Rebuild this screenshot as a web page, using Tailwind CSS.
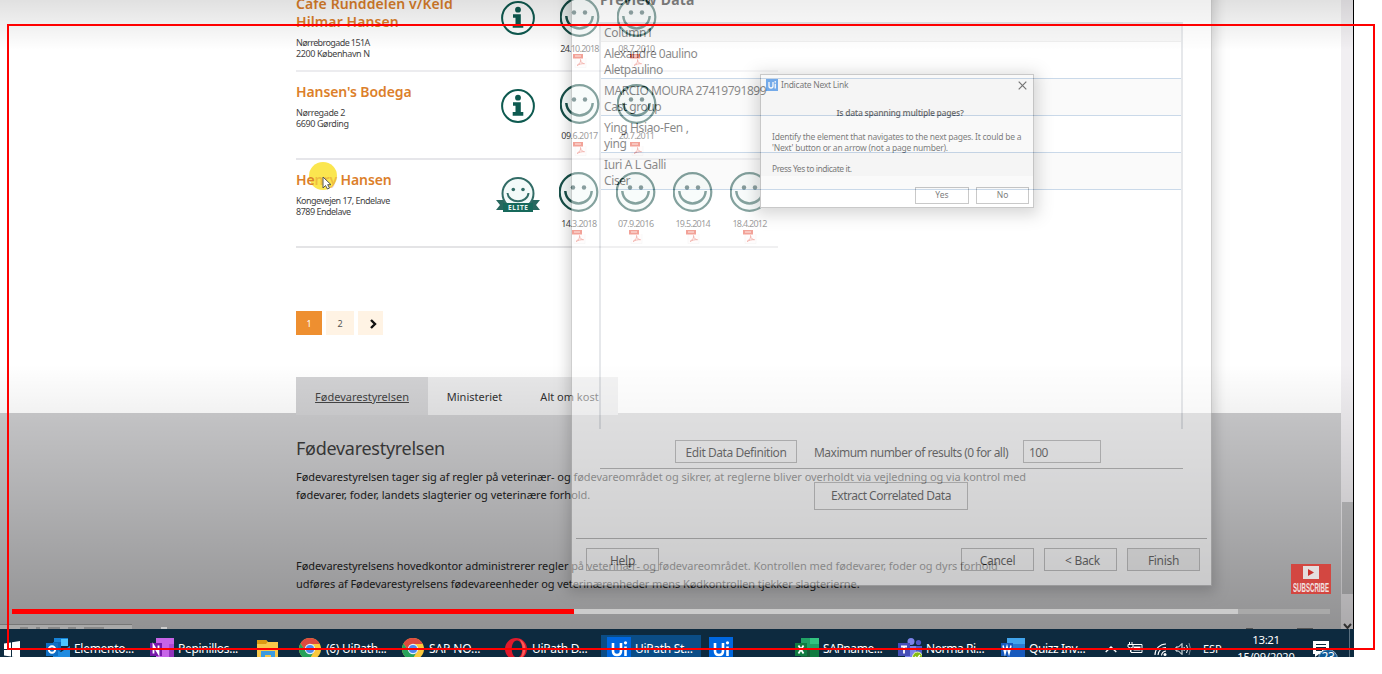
<!DOCTYPE html>
<html lang="da">
<head>
<meta charset="utf-8">
<title>Indicate Next Link</title>
<script src="https://cdn.jsdelivr.net/npm/@tailwindcss/browser@4"></script>
</head>
<body class="relative h-[674px] w-[1382px] overflow-hidden bg-white font-['Noto_Sans',sans-serif] whitespace-nowrap">

<svg class="hidden" aria-hidden="true">
  <symbol id="smile" viewBox="0 0 40 40">
    <circle cx="19.500" cy="20" r="18.8" fill="#f3faf9" stroke="#164f48" stroke-width="2.200"/>
    <circle cx="14" cy="15.5" r="2.2" fill="#1f4848"/><circle cx="25" cy="15.500" r="2.2" fill="#1f4848"/>
    <path d="M6.300 19C7.500 35.500 31.500 35.500 32.700 19" fill="none" stroke="#164f48" stroke-width="2.500"/>
  </symbol>
  <symbol id="info" viewBox="0 0 34 34">
    <circle cx="17" cy="17" r="15.900" fill="#fff" stroke="#0e5a50" stroke-width="2"/>
    <circle cx="17" cy="8.700" r="2.900" fill="#0e5a50"/>
    <path d="M12 13.200h7.800v9.800h2.500v3.800H11.700V23h2.800v-6.300H12z" fill="#0e5a50"/>
  </symbol>
  <symbol id="elite" viewBox="0 0 46 36">
    <path d="M1 23h11v10H1l4-5zM45 23H34v10h11l-4-5z" fill="#28685f"/>
    <circle cx="23" cy="16.500" r="15.500" fill="#f3faf9" stroke="#326c66" stroke-width="2"/>
    <circle cx="18.300" cy="12.500" r="1.800" fill="#326c66"/><circle cx="28" cy="12.500" r="1.800" fill="#326c66"/>
    <path d="M12.500 16c1 11 20 11 21 0" fill="none" stroke="#326c66" stroke-width="2"/>
    <path d="M8 26h30v9H8z" fill="#17695b"/>
    <text x="23" y="33" text-anchor="middle" font-family="Noto Sans" font-weight="700" font-size="6.500" textLength="20" fill="#e8f5f2">ELITE</text>
  </symbol>
  <symbol id="pdf" viewBox="0 0 15 14">
    <path d="M3 4v9.500h11V4" fill="#fffafa" stroke="#eee" stroke-width=".6"/>
    <path d="M1 0h10v4.500H1z" fill="#e8503c"/><path d="M3 2h6" stroke="#fbd5cf" stroke-width="1"/>
    <path d="M5 11.500c3-2 4-4 3.500-6 .2 3 2 4 4 4.200-3-.2-5 .5-7.500 1.800" fill="none" stroke="#ea7a70" stroke-width="1"/>
  </symbol>
  <symbol id="chrome" viewBox="0 0 22 22">
    <circle cx="11" cy="11" r="11" fill="#fbc93d"/>
    <path d="M1.500 5.500A11 11 0 0 1 20.800 6H11l-4 8z" fill="#de4b3f"/>
    <path d="M1.500 5.500A11 11 0 0 0 10 22l5-8.500-8.500-.5z" fill="#27a25b"/>
    <circle cx="11" cy="11" r="5.200" fill="#e8eefc"/><circle cx="11" cy="11" r="4.100" fill="#4b88ef"/>
  </symbol>
  <symbol id="ui" viewBox="0 0 24 24">
    <path d="M0 0h24v24H0z" fill="#0067df"/>
    <path d="M6 6v8q0 4 4 4t4-4V6M18.500 9.500V19" fill="none" stroke="#fff" stroke-width="2.600"/><circle cx="18.500" cy="5.800" r="1.600" fill="#fff"/>
  </symbol>
</svg>

<!-- Recorded video -->
<main class="relative h-[629px] w-[1354px] overflow-hidden border-r border-black bg-white">
  <div class="flex h-full w-[1341px] flex-col">
    <section class="-mt-4 ml-[296px] w-[482px] text-[9px] text-[#444]">
      <article class="flex h-[88px] border-b-2 border-[#ececef]">
        <div class="w-[188px] pt-[11px]">
          <h2 class="text-[14px] leading-[18px] font-semibold tracking-[0.1px] text-[#dc7f2b]">Cafe Runddelen v/Keld<br>Hilmar Hansen</h2>
          <p class="mt-[6px] leading-[11px] tracking-[-0.6px]">Nørrebrogade 151A<br><span class="tracking-[-0.4px]">2200 København N</span></p>
        </div>
        <div class="flex w-[67px] justify-center pt-[17px]"><svg class="size-[34px]"><use href="#info"/></svg></div>
        <div class="flex w-[57px] flex-col items-center pt-[13px]"><svg class="size-10 shrink-0"><use href="#smile"/></svg><span class="mt-[6px] leading-[12px] tracking-[-0.75px]">24.10.2018</span><svg class="-mt-px h-[14px] w-[15px]"><use href="#pdf"/></svg></div>
        <div class="flex w-[57px] flex-col items-center pt-[13px]"><svg class="size-10 shrink-0"><use href="#smile"/></svg><span class="mt-[6px] leading-[12px] tracking-[-0.5px]">08.7.2010</span><svg class="-mt-px h-[14px] w-[15px]"><use href="#pdf"/></svg></div>
      </article>
      <article class="flex h-[88px] border-b-2 border-[#e6e6ea]">
        <div class="w-[188px] pt-[11px]">
          <h2 class="text-[14px] leading-[18px] font-semibold tracking-[-0.1px] text-[#dc7f2b]">Hansen's Bodega</h2>
          <p class="mt-[6px] leading-[11px] tracking-[-0.4px]">Nørregade 2<br>6690 Gørding</p>
        </div>
        <div class="flex w-[67px] justify-center pt-[17px]"><svg class="size-[34px]"><use href="#info"/></svg></div>
        <div class="flex w-[57px] flex-col items-center pt-[12px]"><svg class="size-10 shrink-0"><use href="#smile"/></svg><span class="mt-[6px] leading-[12px] tracking-[-0.5px]">09.6.2017</span><svg class="h-[14px] w-[15px]"><use href="#pdf"/></svg></div>
        <div class="flex w-[57px] flex-col items-center pt-[12px]"><svg class="size-10 shrink-0"><use href="#smile"/></svg><span class="mt-[6px] leading-[12px] tracking-[-0.6px]">20.7.2011</span><svg class="h-[14px] w-[15px]"><use href="#pdf"/></svg></div>
      </article>
      <article class="flex h-[88px] border-b-2 border-[#e4e4e6]">
        <div class="relative w-[188px] pt-[11px]">
          <div class="absolute top-[2px] left-[13px] size-7 rounded-full bg-[#fbe64f]"></div>
          <h2 class="relative text-[14px] leading-[18px] font-semibold tracking-[-0.1px] text-[#dc7f2b]">He<span class="opacity-40">nry</span> Hansen</h2>
          <p class="mt-[6px] leading-[11px] tracking-[-0.5px]">Kongevejen 17, Endelave<br>8789 Endelave</p>
          <svg class="absolute top-[16px] left-[26px] h-[14px] w-[10px]" viewBox="0 0 10 14"><path d="M1 1v11l2.500-2.500L5.500 13l2-1-1.800-3.300H9z" fill="#fff" stroke="#555" stroke-width="1"/></svg>
        </div>
        <div class="flex w-[67px] justify-center pt-[17px] pl-px"><svg class="h-9 w-[46px] shrink-0"><use href="#elite"/></svg></div>
        <div class="flex w-[57px] flex-col items-center pt-[12px]"><svg class="size-10 shrink-0"><use href="#smile"/></svg><span class="mt-[6px] leading-[12px] tracking-[-0.6px]">14.3.2018</span><svg class="h-[14px] w-[15px]"><use href="#pdf"/></svg></div>
        <div class="flex w-[57px] flex-col items-center pt-[12px]"><svg class="size-10 shrink-0"><use href="#smile"/></svg><span class="mt-[6px] leading-[12px] tracking-[-0.6px]">07.9.2016</span><svg class="h-[14px] w-[15px]"><use href="#pdf"/></svg></div>
        <div class="flex w-[57px] flex-col items-center pt-[12px]"><svg class="size-10 shrink-0"><use href="#smile"/></svg><span class="mt-[6px] leading-[12px] tracking-[-0.7px]">19.5.2014</span><svg class="h-[14px] w-[15px]"><use href="#pdf"/></svg></div>
        <div class="flex w-[57px] flex-col items-center pt-[12px]"><svg class="size-10 shrink-0"><use href="#smile"/></svg><span class="mt-[6px] leading-[12px] tracking-[-0.75px]">18.4.2012</span><svg class="h-[14px] w-[15px]"><use href="#pdf"/></svg></div>
      </article>
    </section>

    <nav class="mt-[63px] ml-[296px] flex h-6 gap-1 text-[9px] text-[#555]">
      <span class="flex w-[26px] items-center justify-center bg-[#ee8f30] pt-px text-white">1</span>
      <span class="flex w-[28px] items-center justify-center bg-[#fff3e4] pt-px">2</span>
      <span class="flex w-[25px] items-center justify-center bg-[#fff3e4] pt-px pl-1"><svg class="size-[10px]" viewBox="0 0 10 10"><path d="M3 1l4 4-4 4" fill="none" stroke="#111" stroke-width="2.400"/></svg></span>
    </nav>

    <nav class="relative mt-[42px] ml-[296px] flex h-[38px] text-[11px] text-[#333]">
      <a class="flex w-[132px] items-center justify-center bg-[#d2d2d4] pt-[2px] text-[#444] underline">Fødevarestyrelsen</a>
      <a class="flex w-[93px] items-center justify-center bg-[#e8e8e9] pt-[2px]">Ministeriet</a>
      <a class="flex w-[97px] items-center justify-center bg-[#e8e8e9] pt-[2px]">Alt om kost</a>
    </nav>
    <footer class="-mt-[2px] flex-1 bg-[#cdcdcf] pl-[296px] text-[11px] leading-[18px] text-[#222]">
      <h1 class="pt-[23px] text-[18px] leading-[24px] tracking-[-0.28px] text-[#3c3c3c]">Fødevarestyrelsen</h1>
      <p class="mt-[8px] tracking-[-0.05px]">Fødevarestyrelsen tager sig af regler på veterinær- og fødevareområdet og sikrer, at reglerne bliver overholdt via vejledning og via kontrol med<br><span class="tracking-[-0.02px]">fødevarer, foder, landets slagterier og veterinære forhold.</span></p>
      <p class="mt-[53px] tracking-[-0.06px]">Fødevarestyrelsens hovedkontor administrerer regler på veterinær- og fødevareområdet. Kontrollen med fødevarer, foder og dyrs forhold<br><span class="tracking-[-0.09px]">udføres af Fødevarestyrelsens fødevareenheder og veterinærenheder mens Kødkontrollen tjekker slagterierne.</span></p>
    </footer>
  </div>

  <!-- Page scrollbar -->
  <div class="absolute inset-y-0 right-0 flex w-3 flex-col items-center bg-[#f1eff2]">
    <div class="mt-[502px] h-[92px] w-[11px] bg-[#c4c4c6]"></div>
    <svg class="mt-[29px] h-[6px] w-[9px]" viewBox="0 0 9 6"><path d="M1 1l3.500 4L8 1" fill="none" stroke="#444" stroke-width="2"/></svg>
  </div>

  <!-- Next-link prompt -->
  <div class="absolute top-[74px] left-[760px] flex h-[134px] w-[274px] flex-col border border-[#999] bg-[#f5f5f5] text-[8.5px] text-black shadow-[0_3px_14px_4px_rgba(0,0,0,.28)]">
    <div class="flex h-[20px] items-center pr-[6px] pl-[5px]">
      <svg class="size-[12px]"><use href="#ui"/></svg><span class="ml-[3px] tracking-[-0.25px]">Indicate Next Link</span>
      <svg class="ml-auto size-[9px]" viewBox="0 0 9 9"><path d="M.7.700l7.600 7.600M8.300.700L.700 8.300" stroke="#000" stroke-width="1.200"/></svg>
    </div>
    <p class="mt-[12px] pl-[6px] text-center leading-[12px] font-semibold tracking-[-0.3px]">Is data spanning multiple pages?</p>
    <p class="mt-[12px] pl-[11px] leading-[11px] tracking-[-0.24px]">Identify the element that navigates to the next pages. It could be a<br><span class="tracking-[-0.24px]">'Next' button or an arrow (not a page number).</span></p>
    <p class="mt-[10px] pl-[11px] leading-[12px] tracking-[-0.45px]">Press Yes to indicate it.</p>
    <div class="mt-auto flex h-[31px] justify-end gap-[7px] bg-white pt-[11px] pr-1">
      <span class="flex h-[17px] w-[54px] items-center justify-center border border-[#999]">Yes</span>
      <span class="flex h-[17px] w-[53px] items-center justify-center border border-[#999]">No</span>
    </div>
  </div>

  <!-- Player shading -->
  <div class="absolute inset-x-0 top-0 h-[50px] bg-linear-to-b from-black/12 to-transparent"></div>
  <div class="absolute inset-x-0 bottom-0 h-[265px] bg-linear-to-b from-transparent via-black/14 to-black/29"></div>

  <!-- Status bar fragments -->
  <div class="absolute bottom-0 left-0 flex h-[5px] w-[132px] items-end gap-2 border-t border-[#777] bg-[#a9a9a9] pl-5">
    <i class="h-[2px] w-2 bg-[#888]"></i><i class="h-[2px] w-1 bg-[#888]"></i><i class="h-[2px] w-3 bg-[#888]"></i><i class="h-[2px] w-2 bg-[#888]"></i><i class="h-[2px] w-5 bg-[#888]"></i>
  </div>
  <div class="absolute bottom-0 left-[161px] h-[2px] w-[6px] bg-[#ccc]"></div>
  <div class="absolute bottom-0 left-[1246px] flex gap-11"><i class="h-px w-[7px] bg-[#555]"></i><i class="h-px w-4 bg-[#555]"></i></div>

  <!-- Fading extraction wizard -->
  <section class="absolute -top-5 left-[571px] flex h-[606px] w-[641px] flex-col border border-[#999] bg-white text-[12px] text-black opacity-[.47] shadow-[0_3px_12px_3px_rgba(0,0,0,.35)]">
    <h2 class="mt-[10px] ml-[28px] text-[14px] leading-[18px] font-bold tracking-[0.25px]">Preview Data</h2>
    <div class="mt-[13px] ml-[27px] flex h-[407px] w-[584px] flex-col border-x-2 border-t-2 border-x-[#ccd0d6] border-t-[#c5cad1] pl-[3px] leading-[16px]">
      <div class="-ml-[3px] h-[18px] border-b border-[#ddd] bg-[#f0f0f0] pl-[3px] leading-[18px] tracking-[-0.3px]">Column1</div>
      <div class="-ml-[3px] h-[37px] border-b border-[#8fafd2] bg-white pt-[4px] pl-[3px] tracking-[-0.5px]">Alexandre 0aulino<br>Aletpaulino</div>
      <div class="-ml-[3px] h-[37px] border-b border-[#8fafd2] bg-[#f6f6f6] pt-[4px] pl-[3px] tracking-[-0.45px]">MARCIO MOURA 27419791899<br>Cast group</div>
      <div class="-ml-[3px] h-[37px] border-b border-[#8fafd2] bg-white pt-[4px] pl-[3px] tracking-[-0.35px]">Ying Hsiao-Fen ,<br>ying</div>
      <div class="-ml-[3px] h-[37px] border-b border-[#8fafd2] bg-[#f6f6f6] pt-[4px] pl-[3px] tracking-[-0.4px]">Iuri A L Galli<br>Ciser</div>
    </div>
    <div class="mt-[11px] ml-[28px] flex h-[29px] w-[583px] items-start border-b border-[#888] pl-[75px]">
      <span class="flex h-[23px] w-[122px] items-center justify-center border border-[#999] pt-[2px] tracking-[-0.44px]">Edit Data Definition</span>
      <span class="ml-[17px] w-[209px] pt-px leading-[24px] tracking-[-0.52px]">Maximum number of results (0 for all)</span>
      <span class="flex h-[23px] w-[78px] items-center border border-[#999] pt-[2px] pl-[5px] tracking-[-0.6px]">100</span>
    </div>
    <span class="mt-[13px] ml-[242px] flex h-[28px] w-[154px] items-center justify-center border border-[#999] tracking-[-0.5px]">Extract Correlated Data</span>
    <div class="mx-1 mt-[28px] flex gap-[10px] border-t border-[#888] pt-[9px] pr-[7px] pl-[10px] tracking-[-0.3px]">
      <span class="mr-auto flex h-[23px] w-[73px] items-center justify-center border border-[#999] pt-[2px]">Help</span>
      <span class="flex h-[23px] w-[73px] items-center justify-center border border-[#999] pt-[2px]">Cancel</span>
      <span class="flex h-[23px] w-[73px] items-center justify-center border border-[#999] pt-[2px] pl-1">&lt; Back</span>
      <span class="flex h-[23px] w-[73px] items-center justify-center border border-[#999] bg-[#e9e9e9] pt-[2px]">Finish</span>
    </div>
  </section>

  <!-- Subscribe badge -->
  <div class="absolute top-[564px] left-[1291px] flex h-[30px] w-10 flex-col items-center bg-[#d34741] pt-[2px]">
    <svg class="h-[13px] w-4 shrink-0" viewBox="0 0 16 13"><path d="M0 0h16v13H0z" fill="#e4dede"/><path d="M5 3l6 3.500L5 10z" fill="#c8322e"/></svg>
    <svg class="mt-[2px] h-[12px] w-9 shrink-0" viewBox="0 0 36 12"><text x="0" y="10.500" textLength="36" lengthAdjust="spacingAndGlyphs" font-family="Liberation Sans" font-weight="700" font-size="12.500" fill="#f1e2e1">SUBSCRIBE</text></svg>
  </div>

  <!-- Playback progress -->
  <div class="absolute top-[609px] left-3 flex h-[5px] w-[1318px] bg-[#a9a9a9]">
    <div class="w-[562px] bg-[#f00]"></div><div class="w-[664px] bg-[#cbcbcb]"></div>
  </div>
</main>

<!-- Taskbar -->
<div class="flex h-[28px] w-[1354px] overflow-hidden bg-[#0d2a3f] text-[12px] leading-[16px] tracking-[-0.3px] text-white">
  <svg class="mt-3 ml-1 size-4 shrink-0" viewBox="0 0 16 16"><path d="M0 2.500l7-1V8H0zM8 1.300L16 0v8H8zM0 9h7v6.500l-7-1zM8 9h8v8l-8-1.300z" fill="#fff"/></svg>
  <div class="ml-[26px] flex w-[104px] shrink-0 gap-1">
    <svg class="mt-[9px] size-6" viewBox="0 0 24 24"><path d="M8 0h14v6H8z" fill="#1683d9"/><path d="M15 1h7v7h-7z" fill="#4dc4ff"/><path d="M7 4h8v9H7z" fill="#0a63b4"/><path d="M7 9l8 5 9-6v16H7z" fill="#1f8be0"/><path d="M0 5h12v13H0z" fill="#0f6fc5"/><circle cx="6" cy="11.500" r="3.200" fill="none" stroke="#fff" stroke-width="2"/></svg>
    <span class="mt-3">Elemento...</span>
  </div>
  <div class="flex w-[107px] shrink-0 gap-1">
    <svg class="mt-[9px] size-6" viewBox="0 0 24 24"><path d="M6 0h18v24H6z" fill="#c764e8"/><path d="M19 6h5v6h-5z" fill="#ae4bd5"/><path d="M19 12h5v12h-5z" fill="#9333bd"/><path d="M0 5h12v13H0z" fill="#7719aa"/><path d="M3.500 15.500v-8l5 8v-8" fill="none" stroke="#fff" stroke-width="1.800"/></svg>
    <span class="mt-3">Pepinillos...</span>
  </div>
  <div class="w-[42px] shrink-0">
    <svg class="mt-[11px] h-[20px] w-[22px]" viewBox="0 0 22 20"><path d="M0 0h9l2 2h10v18H0z" fill="#f9c84a"/><path d="M0 0h9l1.500 2L9 4H0z" fill="#dc9b12"/><path d="M4 20v-9h14v9h-4v-5H8v5z" fill="#3c9be0"/></svg>
  </div>
  <div class="flex w-[103px] shrink-0 gap-[5px]"><svg class="mt-[9px] size-[22px]"><use href="#chrome"/></svg><span class="mt-3">(6) UiPath...</span></div>
  <div class="flex w-[103px] shrink-0 gap-[5px]"><svg class="mt-[9px] size-[22px]"><use href="#chrome"/></svg><span class="mt-3 tracking-[-0.1px]">SAP NO...</span></div>
  <div class="flex w-[96px] shrink-0 gap-[5px]">
    <svg class="mt-[9px] size-[22px]" viewBox="0 0 22 22"><path fill-rule="evenodd" d="M11 0a11 11 0 1 0 0 22 11 11 0 0 0 0-22zm1 2.500c7 0 7 17 0 17-7 0-7-17 0-17z" fill="#e01a2c"/><path d="M14 1a11 11 0 0 1 0 20c5-4 5-15 0-20" fill="#ff5a56"/></svg>
    <span class="mt-3">UiPath D...</span>
  </div>
  <div class="mt-[6px] flex w-[100px] shrink-0 gap-1 bg-[#0b4d86] pl-[6px]"><svg class="mt-[2px] size-6"><use href="#ui"/></svg><span class="mt-[6px]">UiPath St...</span></div>
  <svg class="mt-2 mr-[62px] ml-2 size-6 shrink-0"><use href="#ui"/></svg>
  <div class="flex w-[103px] shrink-0 gap-1">
    <svg class="mt-[9px] size-6" viewBox="0 0 24 24"><path d="M6 0h18v24H6z" fill="#21a366"/><path d="M15 0h9v6h-9z" fill="#33c481"/><path d="M15 12h9v12h-9z" fill="#107c41"/><path d="M6 12h9v12H6z" fill="#185c37"/><path d="M0 5h12v13H0z" fill="#107c41"/><path d="M3.500 7.500l5 8M8.500 7.500l-5 8" stroke="#fff" stroke-width="1.800"/></svg>
    <span class="mt-3 tracking-[-0.4px]">SAPname...</span>
  </div>
  <div class="flex w-[103px] shrink-0 gap-1">
    <svg class="mt-[9px] size-6" viewBox="0 0 24 24"><circle cx="13" cy="3.500" r="3.500" fill="#7b83eb"/><circle cx="20.500" cy="4.500" r="2.600" fill="#5059c9"/><path d="M7 8h11v16H7z" fill="#7b83eb"/><path d="M18 8h6v10h-6z" fill="#5059c9"/><path d="M0 5h12v13H0z" fill="#464eb8"/><path d="M3 8.500h6M6 8.500v7" stroke="#fff" stroke-width="1.800"/><circle cx="19.500" cy="19" r="5" fill="#86bd13" stroke="#e9f5c8"/><path d="M17 18.500l2 2 3-3.500" fill="none" stroke="#fff" stroke-width="1.400"/></svg>
    <span class="mt-3 tracking-[-0.4px]">Norma Ri...</span>
  </div>
  <div class="flex w-[104px] shrink-0 gap-1">
    <svg class="mt-[9px] size-6" viewBox="0 0 24 24"><path d="M6 0h18v6H6z" fill="#41a5ee"/><path d="M6 6h18v6H6z" fill="#2b7cd3"/><path d="M6 12h18v12H6z" fill="#185abd"/><path d="M0 5h12v13H0z" fill="#185abd"/><path d="M2 7.500l2 8 2-7 2 7 2-8" fill="none" stroke="#fff" stroke-width="1.500"/></svg>
    <span class="mt-3 tracking-[-0.4px]">Quizz Inv...</span>
  </div>
  <svg class="mt-4 h-2 w-3 shrink-0" viewBox="0 0 12 8"><path d="M.7 7l5.300-5 5.300 5" fill="none" stroke="#fff" stroke-width="1.300"/></svg>
  <svg class="mt-[13px] ml-[10px] h-3 w-4 shrink-0" viewBox="0 0 16 12"><path d="M5 2.500h10v8H4v-3" fill="none" stroke="#fff"/><path d="M6.500 4.500h7v4h-7z" fill="#fff"/><path d="M2.500 0v2M5 0v2M1 2.500h5v2.500q-2.500 2-5 0zM3.500 6v4" fill="none" stroke="#fff"/></svg>
  <svg class="mt-[14px] ml-[11px] h-[13px] w-[14px] shrink-0" viewBox="0 0 14 13"><path d="M1 12A11 11 0 0 1 12 1M4 12a8 8 0 0 1 8-7.500M7.500 12.500A5 5 0 0 1 12 8" fill="none" stroke="#fff" stroke-width="1.100"/><circle cx="11" cy="11.500" r="1.500" fill="#fff"/></svg>
  <svg class="mt-[13px] ml-[7px] h-[14px] w-[17px] shrink-0" viewBox="0 0 17 14"><path d="M1 5h2.500L7 1.500v11L3.500 9H1zM9 5q1.200 2 0 4M11.500 3q2.500 4 0 8" fill="none" stroke="#fff"/><path d="M14 1q3 6 0 12" fill="none" stroke="#7d8b97"/></svg>
  <span class="mt-3 ml-[11px] w-[30px] shrink-0 text-[11px] tracking-[-0.1px]">ESP</span>
  <div class="flex w-[66px] shrink-0 flex-col items-center text-[11px] leading-[17px] tracking-[-0.1px]"><span class="mt-[2px] text-[11.5px] tracking-[-0.4px]">13:21</span><span>15/09/2020</span></div>
  <div class="relative mt-3 ml-[14px] w-[36px] shrink-0">
    <svg class="h-[16px] w-4" viewBox="0 0 16 16"><path d="M0 0h16v13H6l-4 3v-3H0z" fill="#fff"/><path d="M3 3.500h10M3 6.500h10M3 9.500h6" stroke="#0d2a3f"/></svg>
    <span class="absolute top-[8px] left-[5px] flex h-5 w-5 justify-center rounded-full border border-[#8fb0c8] bg-[#0f5a96] text-[12px] leading-[14px]">23</span>
  </div>
  <div class="h-full w-px bg-[#5b7080]"></div>
</div>

<!-- Capture selection frame -->
<div class="absolute top-6 left-[7px] h-[626px] w-[1368px] border-2 border-[#f00]"></div>
</body>
</html>
